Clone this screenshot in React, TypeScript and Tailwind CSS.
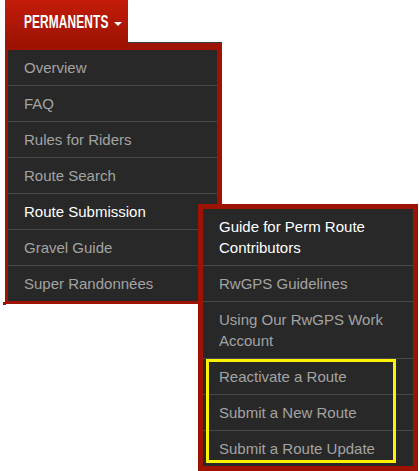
import React from "react";

const mainItems = [
  { label: "Overview" },
  { label: "FAQ" },
  { label: "Rules for Riders" },
  { label: "Route Search" },
  { label: "Route Submission", active: true },
  { label: "Gravel Guide" },
  { label: "Super Randonnées" },
];

const subItems = [
  { label: "Guide for Perm Route Contributors", active: true },
  { label: "RwGPS Guidelines" },
  { label: "Using Our RwGPS Work Account" },
  { label: "Reactivate a Route" },
  { label: "Submit a New Route" },
  { label: "Submit a Route Update" },
];

export default function App() {
  return (
    <div
      className="relative w-[419px] h-[471px] overflow-hidden bg-white"
      style={{ fontFamily: '"Liberation Sans", Arial, sans-serif' }}
    >
      <div className="flex flex-col items-start pl-[5px]">
        {/* Tab */}
        <div className="relative z-10 flex h-[43px] w-[123px] items-center bg-gradient-to-b from-[#c41c0a] to-[#9e1303] pl-[19px]">
          <span className="inline-block origin-left scale-x-[0.66] whitespace-nowrap text-[18px] font-bold leading-none tracking-[0.2px] text-white">
            PERMANENTS
          </span>
          <span className="absolute left-[109px] top-[22px] h-0 w-0 border-x-[4.5px] border-t-[4.5px] border-x-transparent border-t-white" />
        </div>
        {/* Main menu */}
        <div className="w-[217px] border-b-[3px] border-l-[3px] border-r-[5px] border-t-[7px] border-[#9e1203] bg-[#282828] shadow-[0_-1px_0_#3c3c3c]">
          {mainItems.map((it, i) => (
            <div
              key={it.label}
              className={`flex h-[35px] items-center px-4 text-[15px] leading-[21px] ${
                it.active ? "text-white" : "text-[#a3a3a3]"
              } ${i > 0 ? "box-content border-t border-[#474747]" : ""}`}
            >
              {it.label}
            </div>
          ))}
        </div>
      </div>
      <div className="absolute left-[3px] top-[302px] h-[3px] w-[3px] bg-[#9e1203]" />

      {/* Submenu flyout */}
      <div className="absolute left-[198px] top-[204px] w-[220px] border-b-[6px] border-x-[5px] border-t-[5px] border-[#9e1203] bg-[#282828]">
        <div className="relative">
          {subItems.map((it, i) => (
            <div
              key={it.label}
              className={`py-[7px] pl-4 pr-3 text-[15px] leading-[21px] ${
                it.active ? "text-white" : "text-[#a3a3a3]"
              } ${i > 0 ? "border-t border-[#474747]" : ""}`}
            >
              {it.label}
            </div>
          ))}
          <div className="pointer-events-none absolute left-[3px] top-[150px] h-[104px] w-[190px] border-[3px] border-[#fff200]" />
        </div>
      </div>
    </div>
  );
}
